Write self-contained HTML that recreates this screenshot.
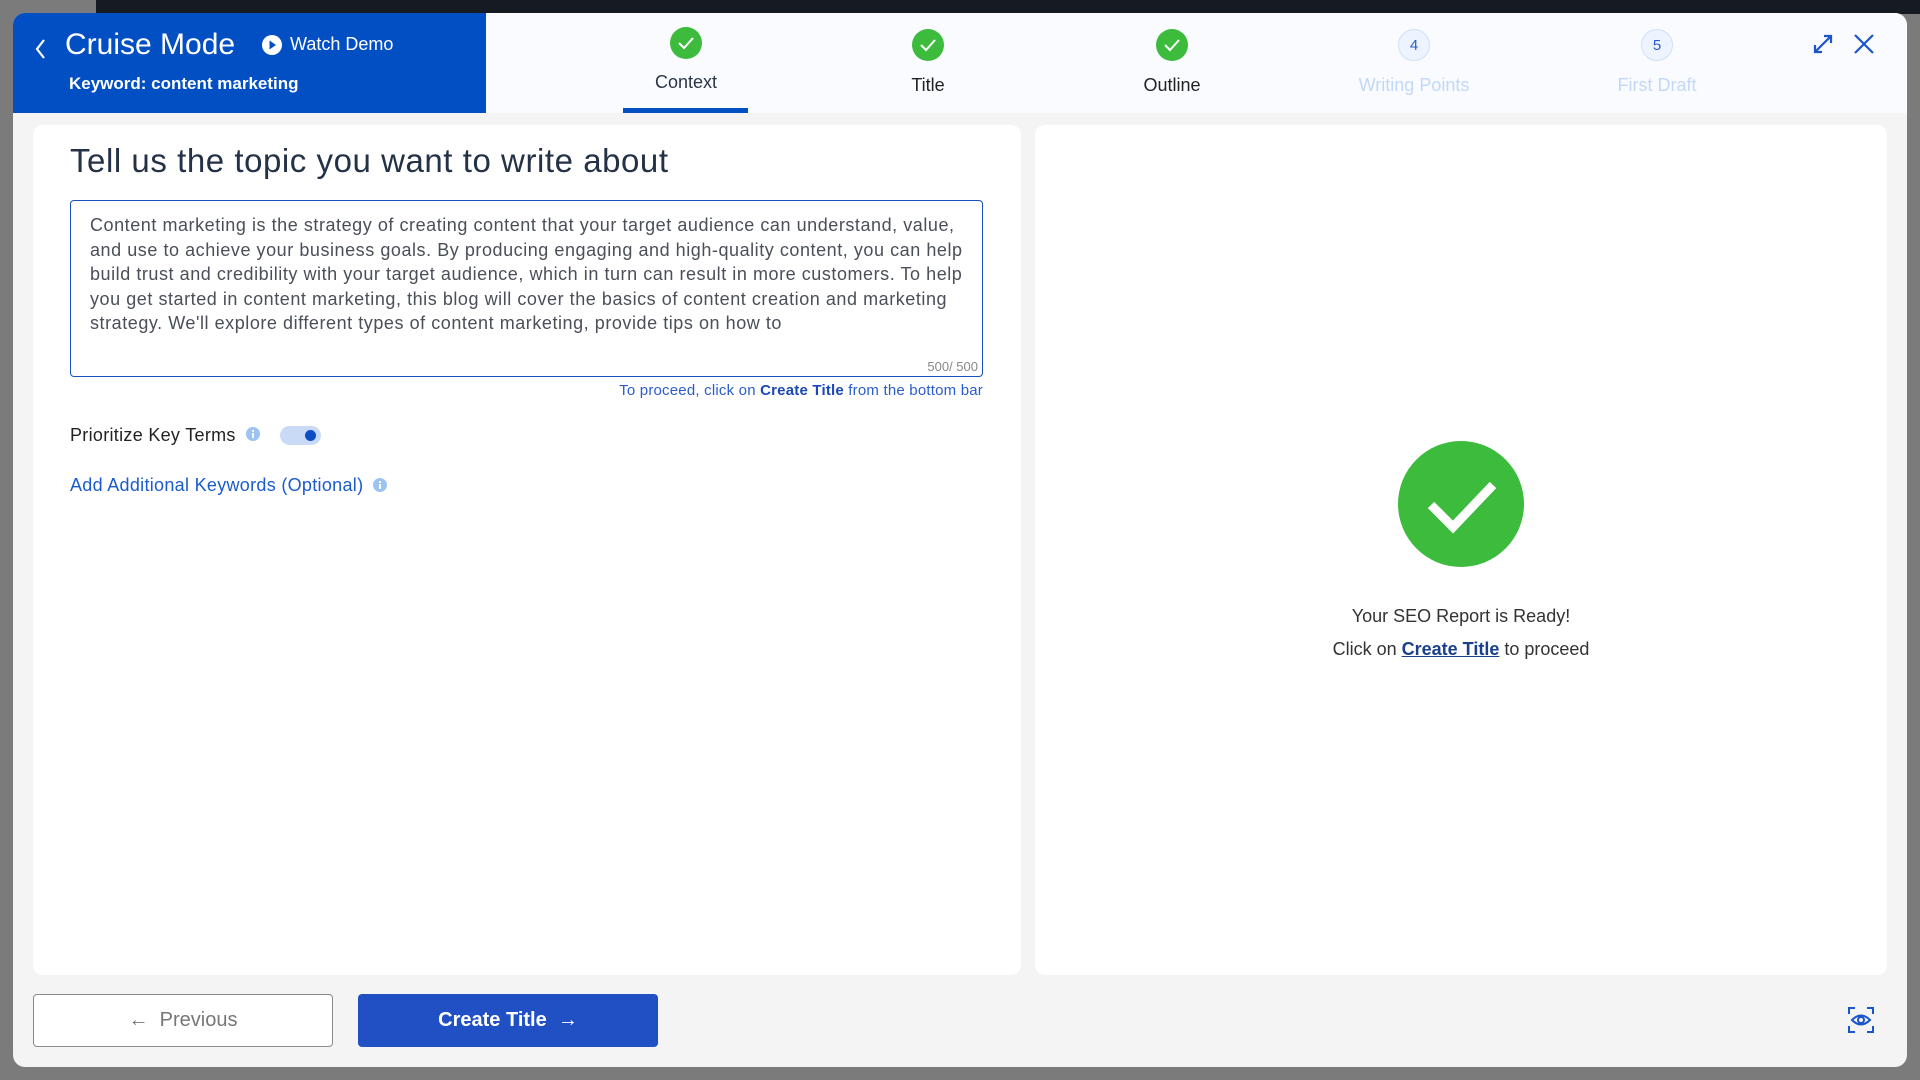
<!DOCTYPE html>
<html><head><meta charset="utf-8"><style>
*{box-sizing:border-box;margin:0;padding:0}
body{width:1920px;height:1080px;background:#7b7b7b;font-family:"Liberation Sans",sans-serif;position:relative;overflow:hidden}
.topbar{position:absolute;left:96px;top:0;width:1824px;height:14px;background:#161b22}
.modal{position:absolute;left:13px;top:13px;width:1894px;height:1054px;background:#f4f4f4;border-radius:12px;overflow:hidden}
.hblue{position:absolute;left:0;top:0;width:473px;height:100px;background:#024fc4;color:#fff}
.hwhite{position:absolute;left:473px;top:0;width:1421px;height:100px;background:#f9fbff}
.abs{position:absolute}
.step{position:absolute;width:200px;text-align:center;top:0}
.circ{width:32px;height:32px;border-radius:50%;margin:16px auto 0;display:flex;align-items:center;justify-content:center}
.ok{background:#3cbb3c}
.num{background:#edf3ff;border:1px solid #cfe0fb;color:#2a5dcc;font-size:15px}
.lbl{font-size:18px;margin-top:14px}
.card{position:absolute;background:#fff;border-radius:10px;top:112px;height:850px}
</style></head><body>
<div class="topbar"></div>
<div class="modal">
 <div class="hblue">
  <svg class="abs" style="left:20px;top:24px" width="16" height="24" viewBox="0 0 16 24"><path d="M11 3 L4 12 L11 21" fill="none" stroke="#fff" stroke-width="2.2"/></svg>
  <div class="abs" style="left:52px;top:15px;font-size:30px;font-weight:500">Cruise Mode</div>
  <svg class="abs" style="left:249px;top:22px" width="20" height="20"><circle cx="10" cy="10" r="10" fill="#fff"/><path d="M7.5 5.5 L14 10 L7.5 14.5Z" fill="#024fc4"/></svg>
  <div class="abs" style="left:277px;top:21px;font-size:18px">Watch Demo</div>
  <div class="abs" style="left:56px;top:61px;font-size:17px;font-weight:bold">Keyword: content marketing</div>
 </div>
 <div class="hwhite">
  <div class="step" style="left:100px"><div class="circ ok" style="margin-top:14px"><svg width="18" height="14"><path d="M2 7 L7 12 L16 2" fill="none" stroke="#fff" stroke-width="2"/></svg></div><div class="lbl" style="color:#2b3548;margin-top:13px">Context</div></div>
  <div class="abs" style="left:137px;top:95px;width:125px;height:5px;background:#024fc4"></div>
  <div class="step" style="left:342px"><div class="circ ok"><svg width="18" height="14"><path d="M2 7 L7 12 L16 2" fill="none" stroke="#fff" stroke-width="2"/></svg></div><div class="lbl" style="color:#222">Title</div></div>
  <div class="step" style="left:586px"><div class="circ ok"><svg width="18" height="14"><path d="M2 7 L7 12 L16 2" fill="none" stroke="#fff" stroke-width="2"/></svg></div><div class="lbl" style="color:#222">Outline</div></div>
  <div class="step" style="left:828px"><div class="circ num">4</div><div class="lbl" style="color:#c3d8f8">Writing Points</div></div>
  <div class="step" style="left:1071px"><div class="circ num">5</div><div class="lbl" style="color:#c3d8f8">First Draft</div></div>
  <svg class="abs" style="left:1326px;top:20px" width="22" height="22" viewBox="0 0 22 22"><path d="M3 19 L19 3 M12 3 H19 V10 M3 12 V19 H10" fill="none" stroke="#1a55cc" stroke-width="2.2"/></svg>
  <svg class="abs" style="left:1367px;top:20px" width="22" height="22"><path d="M2 2 L20 20 M20 2 L2 20" stroke="#1a55cc" stroke-width="2.2"/></svg>
 </div>
 <div class="card" style="left:20px;width:988px">
  <div class="abs" style="left:37px;top:17px;font-size:33px;letter-spacing:0.55px;color:#243247">Tell us the topic you want to write about</div>
  <div class="abs" style="left:37px;top:75px;width:913px;height:177px;border:1.5px solid #1a4fc4;border-radius:4px">
   <div class="abs" style="left:19px;top:12px;font-size:18px;line-height:24.6px;color:#4a4f58;white-space:nowrap;letter-spacing:0.55px">Content marketing is the strategy of creating content that your target audience can understand, value,<br>and use to achieve your business goals. By producing engaging and high-quality content, you can help<br>build trust and credibility with your target audience, which in turn can result in more customers. To help<br>you get started in content marketing, this blog will cover the basics of content creation and marketing<br>strategy. We'll explore different types of content marketing, provide tips on how to</div>
   <div class="abs" style="right:4px;bottom:2px;font-size:13px;color:#888">500/ 500</div>
  </div>
  <div class="abs" style="right:38px;top:257px;font-size:15px;color:#2a5dcc;letter-spacing:0.2px">To proceed, click on <b style="color:#1a48b5;font-weight:600">Create Title</b> from the bottom bar</div>
  <div class="abs" style="left:37px;top:300px;font-size:18px;letter-spacing:0.3px;color:#222">Prioritize Key Terms</div>
  <svg class="abs" style="left:213px;top:302px" width="14" height="14"><circle cx="7" cy="7" r="7" fill="#9cc3f2"/><rect x="6" y="6" width="2" height="5" fill="#fff"/><rect x="6" y="3" width="2" height="2" fill="#fff"/></svg>
  <div class="abs" style="left:247px;top:301px;width:41px;height:19px;border-radius:10px;background:#c8daf6"><div class="abs" style="left:25px;top:4px;width:11px;height:11px;border-radius:50%;background:#0a4dc4"></div></div>
  <div class="abs" style="left:37px;top:350px;font-size:18px;letter-spacing:0.3px;color:#1a5bd0">Add Additional Keywords (Optional)</div>
  <svg class="abs" style="left:340px;top:353px" width="14" height="14"><circle cx="7" cy="7" r="7" fill="#9cc3f2"/><rect x="6" y="6" width="2" height="5" fill="#fff"/><rect x="6" y="3" width="2" height="2" fill="#fff"/></svg>
 </div>
 <div class="card" style="left:1022px;width:852px">
  <svg class="abs" style="left:363px;top:316px" width="126" height="126"><circle cx="63" cy="63" r="63" fill="#3cbb3c"/><path d="M33 64 L55 86 L95 44" fill="none" stroke="#fff" stroke-width="9"/></svg>
  <div class="abs" style="left:0;width:852px;top:481px;text-align:center;font-size:18px;color:#333">Your SEO Report is Ready!</div>
  <div class="abs" style="left:0;width:852px;top:514px;text-align:center;font-size:18px;color:#333">Click on <u style="color:#1a3f8c;font-weight:600">Create Title</u> to proceed</div>
 </div>
 <div class="abs" style="left:20px;top:981px;width:300px;height:53px;background:#fff;border:1px solid #8a8a8a;border-radius:4px;color:#777;font-size:20px;display:flex;align-items:center;justify-content:center">← &nbsp;Previous</div>
 <div class="abs" style="left:345px;top:981px;width:300px;height:53px;background:#214fc4;border-radius:4px;color:#fff;font-size:20px;font-weight:bold;display:flex;align-items:center;justify-content:center">Create Title &nbsp;→</div>
 <svg class="abs" style="left:1834px;top:993px" width="28" height="28" viewBox="0 0 28 28"><path d="M2 8 V2 H8 M20 2 H26 V8 M26 20 V26 H20 M8 26 H2 V20" fill="none" stroke="#1a55cc" stroke-width="2"/><path d="M5 14 Q14 5 23 14 Q14 23 5 14Z" fill="none" stroke="#1a55cc" stroke-width="2"/><circle cx="14" cy="14" r="3" fill="none" stroke="#1a55cc" stroke-width="2"/></svg>
</div>
</body></html>
